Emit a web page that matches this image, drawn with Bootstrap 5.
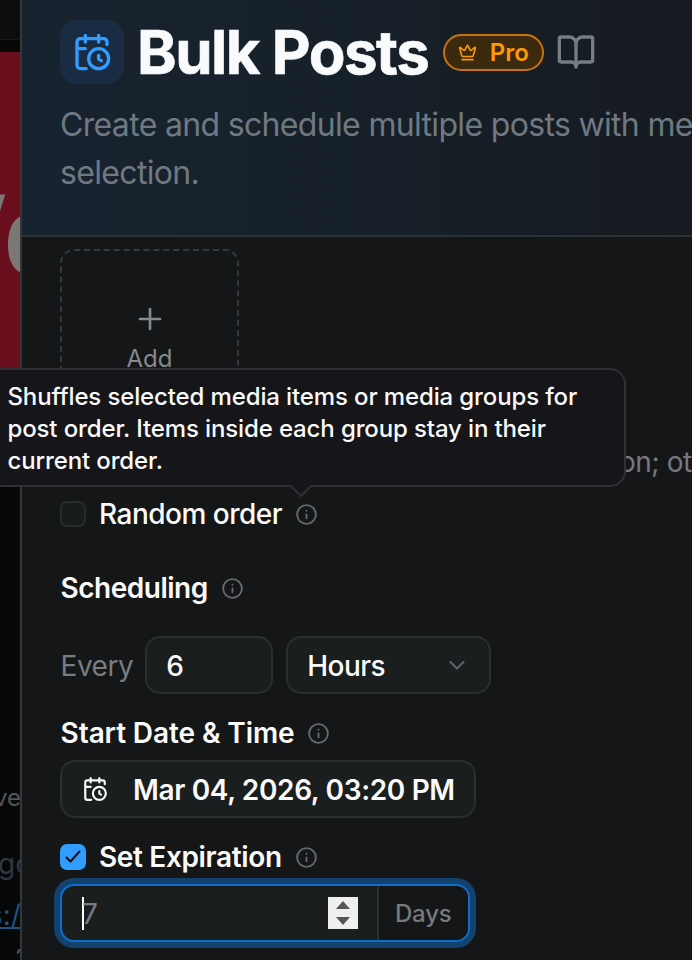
<!DOCTYPE html>
<html lang="en" data-bs-theme="dark">
<head>
<meta charset="utf-8">
<meta name="viewport" content="width=device-width, initial-scale=1">
<title>Bulk Posts</title>
<link href="https://cdn.jsdelivr.net/npm/bootstrap@5.3.0/dist/css/bootstrap.min.css" rel="stylesheet">
<style>
body{font-family:Inter,"Liberation Sans",sans-serif;background:#050607;color:#fafafa;width:692px;height:960px;overflow:hidden;font-size:28px;line-height:40px}
svg{display:block;flex:none}
.ico{fill:none;stroke:currentColor;stroke-width:2;stroke-linecap:round;stroke-linejoin:round}
.behind{width:20px;height:960px;flex:none;color:#55565a}
.behind-top{height:52px;background:linear-gradient(#0c0d0e 0 39px,#17181a 39px 40px,#070708 40px)}
.behind-photo{height:318px;background:#690f1e}
.behind-text{height:590px;background:linear-gradient(90deg,#040506,#07090a)}
.behind-text span{position:absolute;white-space:nowrap;line-height:32px}
.sheet{width:670px;height:960px;flex:none;background:#141617;border-left:2px solid #343638;box-sizing:content-box}
.sheet-head{height:237px;padding:20px 0 0 38px;border-bottom:2px solid #2a3335;background:linear-gradient(90deg,#172330,#17212a 40%,#161d24 75%,#161b21)}
.sheet-body{padding-left:38px}
.app-icon{width:64px;height:64px;border-radius:18px;background:#192c43;color:#309dff}
.head-title{font-size:60px;line-height:64px;font-weight:700;letter-spacing:-1.5px;margin:0 0 0 13px;color:#f8fafc;-webkit-text-stroke:.6px #f8fafc}
.pro{width:101px;height:37px;border:2px solid #c9720c;border-radius:19px;background:#3b2910;color:#fd9a08;font-size:24px;font-weight:600;line-height:33px;margin-left:15px;padding-left:13px}
.book{margin-left:12px}
.desc{font-size:32px;line-height:48px;letter-spacing:-.67px;color:#6f7982;margin:17px 0 0;white-space:nowrap}
.muted{color:#777d82}
.add-tile{width:179px;height:179px;margin-top:12px;border:2px dashed #35393b;border-radius:14px;color:#848a8e;font-size:24px;line-height:32px;padding-top:52px}
.hint{height:40px;margin-top:14px;padding-left:559px;color:#74797e;font-size:28px;letter-spacing:-.5px;white-space:nowrap}
.rowline{height:40px}
.tick{width:26px;height:26px;border-radius:7px;border:2px solid #262b2c;background:#181c1d}
.tick.on{background:#309dff;border-color:#309dff;color:#0b1117}
.info{color:#66696b;stroke-width:2;width:23px;height:23px;margin-left:13px}
.field{height:58px;border:2px solid #2a2e2f;border-radius:15px;background:#1a1e1f;font-size:28px}
.m5{font-weight:500}
.m6{font-weight:600}
.snug{letter-spacing:-.5px}
.snug-sm{letter-spacing:-.35px}
.snug-xs{letter-spacing:-.1px}
.inset{padding-left:.6px}
.nudge{padding-top:1px}
.focusbox{width:410px;height:58px;border:2px solid #0d6fca;border-radius:14px;background:#1a1e1f;box-shadow:0 0 0 6px #13426f}
.caret{width:2px;height:33px;background:#fff}
.unit{width:91px;height:54px;border-left:2px solid #2c3031;border-radius:0 12px 12px 0;background:#141617;color:#777a7d;font-size:24px;font-weight:500;letter-spacing:-.2px}
.tip{position:absolute;left:-20px;top:368px;width:646px;height:119px;border:2px solid #303133;border-radius:16px;background:#16161a;font-size:24px;line-height:32px;letter-spacing:-.13px;padding:11px 0 0 25.5px;font-weight:500;white-space:nowrap}
.tip svg{position:absolute;left:307px;top:115px}
</style>
<script src="https://cdn.jsdelivr.net/npm/bootstrap@5.3.0/dist/js/bootstrap.bundle.min.js"></script>
</head>
<body>
<svg width="0" height="0" class="position-absolute">
<symbol id="cal" viewBox="0 0 24 24"><path d="M16 14v2.2l1.6 1M16 2v4M21 7.5V6a2 2 0 0 0-2-2H5a2 2 0 0 0-2 2v14a2 2 0 0 0 2 2h3.5M3 10h5M8 2v4"/><circle cx="16" cy="16" r="6"/></symbol>
<symbol id="inf" viewBox="0 0 24 24"><circle cx="12" cy="12" r="9.800"/><path d="M12 16v-4M12 8h.01"/></symbol>
</svg>
<div class="d-flex position-relative">
<div class="behind overflow-hidden position-relative">
  <div class="behind-top"></div>
  <div class="behind-photo"><svg width="20" height="318" fill="#7a7775" font-family="Roboto, sans-serif" font-weight="900" font-size="108"><text transform="translate(-37 219) scale(.62 1)">Y</text><text transform="translate(6 221) scale(.7 1)">o</text></svg></div>
  <div class="behind-text">
    <span style="left:-6px;top:782px;font-size:24px">ver</span>
    <span style="left:-2px;top:848px;font-size:28px;color:#323640">go</span>
    <span style="left:-12px;top:899px;font-size:28px;color:#1c5282;text-decoration:underline">s://</span>
    <span style="left:0;top:942px;font-size:26px">. 2</span>
  </div>
</div>
<main class="sheet overflow-hidden">
  <header class="sheet-head">
    <div class="d-flex align-items-center">
      <div class="app-icon d-flex align-items-center justify-content-center"><svg class="ico" width="40" height="40"><use href="#cal"/></svg></div>
      <h1 class="head-title">Bulk Posts</h1>
      <div class="pro d-flex align-items-center"><svg class="ico me-2" width="19" height="19" viewBox="0 0 24 24"><path d="M11.562 3.266a.5.5 0 0 1 .876 0L15.39 8.87a1 1 0 0 0 1.516.294L21.183 5.5a.5.5 0 0 1 .798.519l-2.834 10.246a1 1 0 0 1-.956.734H5.81a1 1 0 0 1-.957-.734L2.02 6.02a.5.5 0 0 1 .798-.519l4.276 3.664a1 1 0 0 0 1.516-.294zM5 21h14"/></svg><span class="ms-1 inset">Pro</span></div>
      <svg class="ico muted book" width="40" height="40" viewBox="0 0 24 24"><path d="M12 7v14M3 18a1 1 0 0 1-1-1V4a1 1 0 0 1 1-1h5a4 4 0 0 1 4 4 4 4 0 0 1 4-4h5a1 1 0 0 1 1 1v13a1 1 0 0 1-1 1h-6a3 3 0 0 0-3 3 3 3 0 0 0-3-3z"/></svg>
    </div>
    <p class="desc">Create and schedule multiple posts with media<br>selection.</p>
  </header>
  <div class="sheet-body">
    <div class="add-tile d-flex flex-column align-items-center"><svg class="ico" width="32" height="32" viewBox="0 0 24 24"><path d="M4.500 12h15M12 4.500v15"/></svg><span class="mt-2">Add</span></div>
    <div class="hint">on; otherwise</div>
    <div class="rowline d-flex align-items-center" style="margin-top:12px"><span class="tick"></span><span class="m5 snug" style="margin-left:13px">Random order</span><svg class="ico info"><use href="#inf"/></svg></div>
    <div class="rowline d-flex align-items-center" style="margin-top:34px"><span class="m6 snug inset">Scheduling</span><svg class="ico info"><use href="#inf"/></svg></div>
    <div class="d-flex align-items-center" style="margin-top:28px"><span class="muted snug nudge inset">Every</span>
      <div class="field d-flex align-items-center m5" style="width:128px;margin-left:12px;padding-left:19px"><span class="nudge">6</span></div>
      <div class="field d-flex align-items-center m5" style="width:205px;margin-left:13px;padding-left:19px"><span class="snug nudge">Hours</span><svg class="ico muted ms-auto" style="margin-right:20px" width="24" height="24" viewBox="0 0 24 24" stroke-opacity=".75"><path d="M5.500 9l6.500 6.500 6.500-6.500"/></svg></div>
    </div>
    <div class="rowline d-flex align-items-center" style="margin-top:19px"><span class="m6 snug-xs inset">Start Date &amp; Time</span><svg class="ico info"><use href="#inf"/></svg></div>
    <div class="field d-flex align-items-center m6" style="width:416px;margin-top:7px;padding-left:20px"><svg class="ico" width="26" height="26"><use href="#cal"/></svg><span class="snug-sm nudge" style="margin-left:25px">Mar 04, 2026, 03:20 PM</span></div>
    <div class="rowline d-flex align-items-center" style="margin-top:19px"><span class="tick on"><svg class="ico" width="22" height="22" viewBox="0 0 22 22"><path d="M4.500 11.500l4 4 9-10"/></svg></span><span class="m6 snug-sm" style="margin-left:13px">Set Expiration</span><svg class="ico info"><use href="#inf"/></svg></div>
    <div class="focusbox d-flex align-items-center" style="margin-top:7px"><span class="caret" style="margin-left:20px"></span><span class="muted nudge" style="margin-left:-2px">7</span>
      <svg class="ms-auto" style="margin-right:19px" width="30" height="32" viewBox="0 0 30 32"><path fill="#efefef" d="M0 0h30v32H0z"/><path fill="#555" d="M8 12l7-8 7 8zM8 20h14l-7 8z"/></svg>
      <span class="unit d-flex align-items-center nudge" style="padding-left:16px">Days</span></div>
  </div>
</main>
<div class="tip">Shuffles selected media items or media groups for<br>post order. Items inside each group stay in their<br>current order.
<svg width="24" height="14"><path d="M1 0L12 11 23 0" fill="#16161a" stroke="#303133" stroke-width="2"/></svg></div>
</div>
</body>
</html>
